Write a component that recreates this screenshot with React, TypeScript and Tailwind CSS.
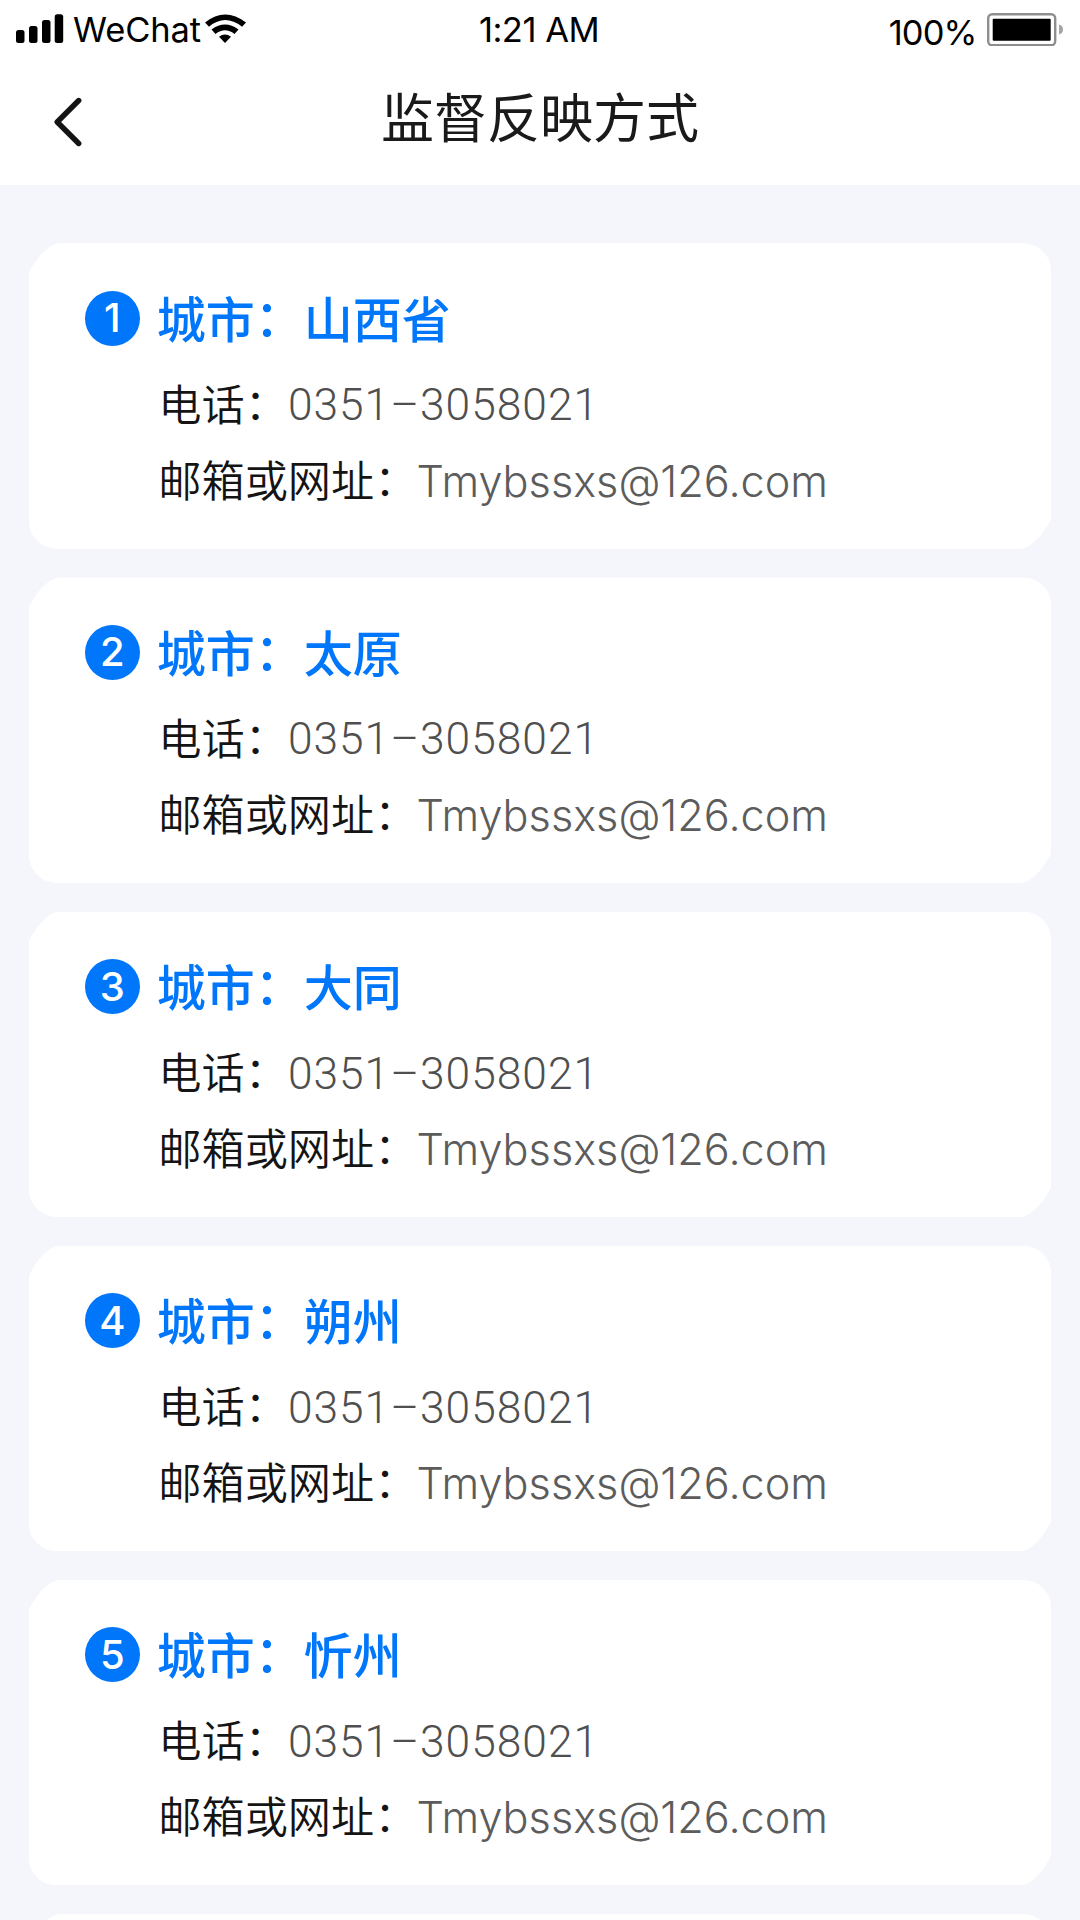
import React from 'react';

interface Contact {
    city: string;
    phone: string;
    email: string;
}

const CONTACTS: Contact[] = [
    { city: '山西省', phone: '0351–3058021', email: 'Tmybssxs@126.com' },
    { city: '太原', phone: '0351–3058021', email: 'Tmybssxs@126.com' },
    { city: '大同', phone: '0351–3058021', email: 'Tmybssxs@126.com' },
    { city: '朔州', phone: '0351–3058021', email: 'Tmybssxs@126.com' },
    { city: '忻州', phone: '0351–3058021', email: 'Tmybssxs@126.com' },
];

function StatusBar() {
    return (
        <div className="flex h-[60px] items-start justify-between text-black">
            <div className="flex w-[340px] items-start pl-4 pt-[14px]">
                <svg className="h-[30px] w-12" viewBox="0 0 48 30">
                    <rect x="0" y="16" width="8.5" height="13" rx="2.5" />
                    <rect x="13" y="12" width="8.5" height="17" rx="2.5" />
                    <rect x="26" y="6" width="8.5" height="23" rx="2.5" />
                    <rect x="38.7" y="0.3" width="8.5" height="28.7" rx="2.5" />
                </svg>
                <span className="ml-[9px] -mt-[5px] w-[132px] whitespace-nowrap text-[34.5px] leading-[42px] tracking-[-0.1px]">WeChat</span>
                <svg className="h-[30px] w-[42px]" viewBox="0 0 42 30">
                    <path d="M0 8.5 Q20 -7.5 41 8.5 L37 12.7 Q20 -0.5 4 12.7 Z" />
                    <path d="M6.5 15.5 Q20 5.5 33.5 15.5 L29.5 20 Q20 12.5 10.5 20 Z" />
                    <path d="M14 22.7 Q20 18.5 26 22.7 L20 29 Z" />
                </svg>
            </div>
            <span className="mt-[9px] mr-0.5 whitespace-nowrap text-[34.5px] leading-[42px] tracking-[-0.5px]">1:21 AM</span>
            <div className="flex w-[340px] items-start justify-end pr-4 pt-[13px]">
                <span className="mr-[10.5px] -mt-[1px] whitespace-nowrap text-[34.5px] leading-[42px] tracking-[-0.9px]">100%</span>
                <svg className="h-[33px] w-[77px]" viewBox="0 0 77 33">
                    <rect x="1.2" y="1.2" width="67" height="31" rx="4" fill="none" stroke="#8e8e8e" strokeWidth="2.4" />
                    <rect x="5.7" y="5.7" width="58" height="22" rx="1" />
                    <path d="M72 11.5 Q76 12.5 76 16.5 Q76 20.5 72 21.5 Z" fill="#a5a5a5" />
                </svg>
            </div>
        </div>
    );
}

function Header() {
    return (
        <header className="h-[184.5px] bg-white">
            <StatusBar />
            <div className="grid grid-cols-[340px_1fr_340px] items-start">
                <button className="ml-[54px] mt-[36.5px] w-7">
                    <svg className="h-[50px] w-7" viewBox="0 0 28 50" fill="none" stroke="#141414" strokeWidth="5.4" strokeLinecap="round" strokeLinejoin="round">
                        <path d="M24.7 3.5 L3.2 25 L24.7 46.5" />
                    </svg>
                </button>
                <h1 className="mt-[21px] text-center text-[53px] leading-[76px] whitespace-nowrap text-[#1a1a1a]">监督反映方式</h1>
            </div>
        </header>
    );
}

function Label({ children }: { children: React.ReactNode }) {
    return (
        <span className="flex font-[350] text-[#141414]">
            {children}
            <span className="inline-block -translate-y-[1px]">：</span>
        </span>
    );
}

// top-left and bottom-right corners are cut flatter than the other two
const CARD_SHAPE =
    "h-[305.5px] bg-white [clip-path:path('M0_30_C8_14_19_1_31_0_H994.4_A28_28_0_0_1_1022.4_28_V275.5_C1014.4_291.5_1003.4_304.5_991.4_305.5_H28_A28_28_0_0_1_0_277.5_Z')]";

function ContactCard({ index, contact }: { index: number; contact: Contact }) {
    return (
        <li className={`${CARD_SHAPE} pl-14 pt-[47px]`}>
            <div className="flex h-[56px] items-center">
                <span className="flex h-[55px] w-[55px] items-center justify-center rounded-full bg-[#0076fa] text-[40px] font-medium leading-none text-white">
                    {index}
                </span>
                <h2 className="ml-[17px] mt-[5px] flex text-[49px] leading-[56px] font-medium whitespace-nowrap text-[#0076fa]">
                    城市
                    <span className="inline-block -translate-y-[2px]">：</span>
                    {contact.city}
                </h2>
            </div>
            <div className="ml-[73.5px] mt-[30.5px] flex h-[56px] items-center text-[43.2px] leading-[56px] whitespace-nowrap">
                <Label>电话</Label>
                <span className="mt-px font-['Roboto'] text-[44.3px] font-light tracking-[1px] text-[#4f4f4f]">{contact.phone}</span>
            </div>
            <div className="ml-[73.5px] mt-[20px] flex h-[56px] items-center text-[43.2px] leading-[56px] whitespace-nowrap">
                <Label>邮箱或网址</Label>
                <span className="-ml-px font-light text-[#5c5c5c]">{contact.email}</span>
            </div>
        </li>
    );
}

export default function App() {
    return (
        <div className="h-[1920px] w-[1080px] overflow-hidden bg-[#f4f6fb] font-['Inter','Noto_Sans_CJK_SC',sans-serif]">
            <Header />
            <ul className="flex flex-col gap-[28.7px] px-[28.8px] pt-[58.7px]">
                {CONTACTS.map((contact, i) => (
                    <ContactCard key={contact.city} index={i + 1} contact={contact} />
                ))}
                <li className={CARD_SHAPE} />
            </ul>
        </div>
    );
}
